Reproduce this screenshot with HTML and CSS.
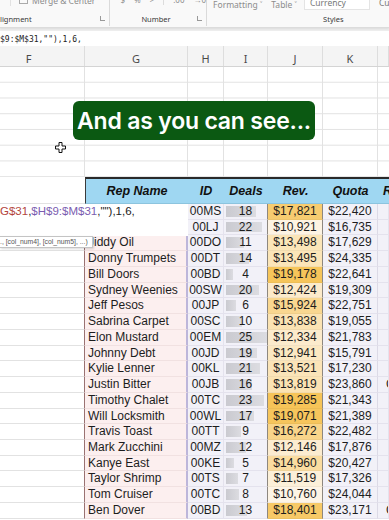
FILE: index.html
```html
<!DOCTYPE html>
<html lang="en">
<head>
  <meta charset="UTF-8" />
  <meta name="viewport" content="width=device-width, initial-scale=1.0"/>
  <title>Sales Reps</title>
  <link rel="stylesheet" href="styles.css">
</head>

<body>
  <header class="ribbon">
    <div class="group group-align">
      <div class="controls">
        <span class="merge-btn"><span class="merge-icon"></span>Merge &amp; Center</span>
      </div>
      <div class="label">lignment<span class="launcher"></span></div>
    </div>
    <div class="group group-number">
      <div class="controls symbols">
        <span>$</span><span>%</span><span>&gt;</span><span class="sep"></span><span>.00</span><span>→0</span>
      </div>
      <div class="label">Number<span class="launcher"></span></div>
    </div>
    <div class="group group-styles">
      <div class="controls">
        <span class="drop">Formatting ˅</span>
        <span class="drop">Table ˅</span>
        <span class="style-box">Currency</span>
        <span class="style-box">Curr</span>
      </div>
      <div class="label">Styles</div>
    </div>
  </header>

  <div class="formula-bar">$9:$M$31,""),1,6,</div>

  <div class="col-heads">
    <div>F</div><div>G</div><div>H</div><div>I</div><div>J</div><div>K</div><div></div>
  </div>

  <main class="sheet">
    <div class="blank"></div>

    <div class="row table-head">
      <div class="gutter"></div>
      <div class="th th-first">Rep Name</div>
      <div class="th">ID</div>
      <div class="th">Deals</div>
      <div class="th">Rev.</div>
      <div class="th">Quota</div>
      <div class="th th-cut">R</div>
    </div>

    <div class="row data"><div class="gutter"></div><div class="name edited"></div><div class="id">00MS</div><div class="deals"><span class="bar" style="width:29.5px"></span><span class="num">18</span></div><div class="rev" style="background:#f7cc70">$17,821</div><div class="quota">$22,420</div><div class="extra"></div></div>
    <div class="row data"><div class="gutter"></div><div class="name edited"></div><div class="id">00LJ</div><div class="deals"><span class="bar" style="width:36px"></span><span class="num">22</span></div><div class="rev" style="background:#fdf3e3">$10,921</div><div class="quota">$16,735</div><div class="extra"></div></div>
    <div class="row data"><div class="gutter"></div><div class="name">Jiddy Oil</div><div class="id">00DO</div><div class="deals"><span class="bar" style="width:18px"></span><span class="num">11</span></div><div class="rev" style="background:#fbe5b8">$13,498</div><div class="quota">$17,629</div><div class="extra"></div></div>
    <div class="row data"><div class="gutter"></div><div class="name">Donny Trumpets</div><div class="id">00DT</div><div class="deals"><span class="bar" style="width:23px"></span><span class="num">14</span></div><div class="rev" style="background:#fbe5b8">$13,495</div><div class="quota">$24,335</div><div class="extra"></div></div>
    <div class="row data"><div class="gutter"></div><div class="name">Bill Doors</div><div class="id">00BD</div><div class="deals"><span class="bar" style="width:6.6px"></span><span class="num">4</span></div><div class="rev" style="background:#f6c55a">$19,178</div><div class="quota">$22,641</div><div class="extra"></div></div>
    <div class="row data"><div class="gutter"></div><div class="name">Sydney Weenies</div><div class="id">00SW</div><div class="deals"><span class="bar" style="width:32.8px"></span><span class="num">20</span></div><div class="rev" style="background:#fceaca">$12,424</div><div class="quota">$19,309</div><div class="extra"></div></div>
    <div class="row data"><div class="gutter"></div><div class="name">Jeff Pesos</div><div class="id">00JP</div><div class="deals"><span class="bar" style="width:9.8px"></span><span class="num">6</span></div><div class="rev" style="background:#f9d790">$15,924</div><div class="quota">$22,751</div><div class="extra"></div></div>
    <div class="row data"><div class="gutter"></div><div class="name">Sabrina Carpet</div><div class="id">00SC</div><div class="deals"><span class="bar" style="width:16.4px"></span><span class="num">10</span></div><div class="rev" style="background:#fbe3b3">$13,838</div><div class="quota">$19,055</div><div class="extra"></div></div>
    <div class="row data"><div class="gutter"></div><div class="name">Elon Mustard</div><div class="id">00EM</div><div class="deals"><span class="bar" style="width:41px"></span><span class="num">25</span></div><div class="rev" style="background:#fcebcc">$12,334</div><div class="quota">$21,783</div><div class="extra"></div></div>
    <div class="row data"><div class="gutter"></div><div class="name">Johnny Debt</div><div class="id">00JD</div><div class="deals"><span class="bar" style="width:31.2px"></span><span class="num">19</span></div><div class="rev" style="background:#fbe8c2">$12,941</div><div class="quota">$15,791</div><div class="extra"></div></div>
    <div class="row data"><div class="gutter"></div><div class="name">Kylie Lenner</div><div class="id">00KL</div><div class="deals"><span class="bar" style="width:34.4px"></span><span class="num">21</span></div><div class="rev" style="background:#fbe4b8">$13,521</div><div class="quota">$17,230</div><div class="extra"></div></div>
    <div class="row data"><div class="gutter"></div><div class="name">Justin Bitter</div><div class="id">00JB</div><div class="deals"><span class="bar" style="width:26.2px"></span><span class="num">16</span></div><div class="rev" style="background:#fbe3b3">$13,819</div><div class="quota">$23,860</div><div class="extra">C</div></div>
    <div class="row data"><div class="gutter"></div><div class="name">Timothy Chalet</div><div class="id">00TC</div><div class="deals"><span class="bar" style="width:37.7px"></span><span class="num">23</span></div><div class="rev" style="background:#f6c458">$19,285</div><div class="quota">$21,343</div><div class="extra"></div></div>
    <div class="row data"><div class="gutter"></div><div class="name">Will Locksmith</div><div class="id">00WL</div><div class="deals"><span class="bar" style="width:27.9px"></span><span class="num">17</span></div><div class="rev" style="background:#f6c55c">$19,071</div><div class="quota">$21,389</div><div class="extra"></div></div>
    <div class="row data"><div class="gutter"></div><div class="name">Travis Toast</div><div class="id">00TT</div><div class="deals"><span class="bar" style="width:14.8px"></span><span class="num">9</span></div><div class="rev" style="background:#f9d58a">$16,272</div><div class="quota">$22,482</div><div class="extra"></div></div>
    <div class="row data"><div class="gutter"></div><div class="name">Mark Zucchini</div><div class="id">00MZ</div><div class="deals"><span class="bar" style="width:19.7px"></span><span class="num">12</span></div><div class="rev" style="background:#fcecd0">$12,146</div><div class="quota">$17,876</div><div class="extra"></div></div>
    <div class="row data"><div class="gutter"></div><div class="name">Kanye East</div><div class="id">00KE</div><div class="deals"><span class="bar" style="width:8.2px"></span><span class="num">5</span></div><div class="rev" style="background:#fadca0">$14,960</div><div class="quota">$20,427</div><div class="extra"></div></div>
    <div class="row data"><div class="gutter"></div><div class="name">Taylor Shrimp</div><div class="id">00TS</div><div class="deals"><span class="bar" style="width:11.5px"></span><span class="num">7</span></div><div class="rev" style="background:#fcf0d9">$11,519</div><div class="quota">$17,326</div><div class="extra"></div></div>
    <div class="row data"><div class="gutter"></div><div class="name">Tom Cruiser</div><div class="id">00TC</div><div class="deals"><span class="bar" style="width:13.1px"></span><span class="num">8</span></div><div class="rev" style="background:#fdf4e6">$10,760</div><div class="quota">$24,044</div><div class="extra"></div></div>
    <div class="row data"><div class="gutter"></div><div class="name">Ben Dover</div><div class="id">00BD</div><div class="deals"><span class="bar" style="width:21.3px"></span><span class="num">13</span></div><div class="rev" style="background:#f7c967">$18,401</div><div class="quota">$23,171</div><div class="extra">C</div></div>

    <!-- things floating over the grid -->
    <div class="cell-edit"><span class="ref-red">G$31</span>,<span class="ref-purple">$H$9:$M$31</span>,""),1,6,</div>
    <div class="hint">., [col_num4], [col_num5], ...)</div>

    <svg class="cursor" width="11" height="11" viewBox="0 0 11 11">
      <path d="M4 0.5h3v3.5h3.5v3h-3.5v3.5h-3v-3.5h-3.5v-3h3.5z" fill="#fff" stroke="#111" stroke-width="1"/>
    </svg>

    <div class="caption">And as you can see...</div>
  </main>
</body>
</html>
```

FILE: styles.css
```css
:root {
  --cols: 85px 103px 36px 44px 55px 55px 11px;
  --grid: #e2e2e2;
  --lav: #f2f1f8;
  --lav-line: #e4e2ed;
}

* {
  box-sizing: border-box;
}

body {
  margin: 0;
  width: 389px;
  height: 520px;
  overflow: hidden;
  background: #fff;
  font-family: 'Liberation Sans', Arial, sans-serif;
  color: #1d1d1d;
}

/* ribbon */
.ribbon {
  position: relative;
  z-index: 1;
  height: 28px;
  display: flex;
  background: #f9f9f9;
  border-bottom: 1px solid #dcdcdc;
  box-shadow: 0 1px 2px rgba(0, 0, 0, 0.08);
  overflow: hidden;
  font-family: 'Noto Sans', sans-serif;
}

.group {
  height: 26px;
  display: flex;
  flex-direction: column;
  justify-content: space-between;
  border-right: 1px solid #dadada;
}

.group-align { width: 111px; }
.group-number { width: 101px; }
.group-styles { flex: 1; border-right: none; }

.controls {
  height: 10px;
  display: flex;
  align-items: center;
  font-size: 8.5px;
  line-height: 10px;
  color: #8c8c8c;
  white-space: nowrap;
}

.merge-btn {
  margin-left: 10px;
  margin-top: -9px;
  padding: 0 14px 0 8px;
  border-left: 1px solid #e2e2e2;
  display: flex;
  align-items: center;
  gap: 4px;
}

.merge-icon {
  width: 9px;
  height: 7px;
  border: 1px solid #aaa;
}

.symbols {
  gap: 9px;
  padding-left: 10px;
  margin-top: -5px;
  font-size: 8px;
}

.symbols .sep {
  width: 1px;
  height: 9px;
  background: #dcdcdc;
}

.drop {
  margin-left: 6px;
  margin-right: 3px;
}

.style-box {
  height: 11px;
  margin-left: 4px;
  margin-top: -2px;
  padding: 0 5px;
  width: 66px;
  background: #fff;
  border: 1px solid #e4e4e4;
  border-top: none;
  line-height: 8px;
  color: #777;
}

.style-box + .style-box {
  width: auto;
  border: none;
  background: none;
}

.label {
  height: 12px;
  position: relative;
  font-size: 7.5px;
  color: #3a3a3a;
  line-height: 10px;
  white-space: nowrap;
}

.group-number .label { padding-left: 31px; }
.group-styles .label { padding-left: 116px; }

.launcher {
  position: absolute;
  right: 4px;
  top: 2px;
  width: 5px;
  height: 5px;
  border-left: 1px solid #999;
  border-bottom: 1px solid #999;
}

/* formula bar and column letters */
.formula-bar {
  height: 18px;
  border-top: 3px solid #eeeeee;
  padding-top: 2px;
  background: #fff;
  font-family: 'DejaVu Sans Mono', monospace;
  font-size: 8px;
  line-height: 14px;
  color: #222;
  white-space: nowrap;
}

.col-heads {
  display: grid;
  grid-template-columns: var(--cols);
  height: 21px;
  background: #f4f4f4;
  border-bottom: 1px solid #d4d4d4;
  font-family: 'Noto Sans', sans-serif;
  font-size: 11px;
  color: #4a4a4a;
}

.col-heads div {
  display: flex;
  align-items: center;
  justify-content: center;
  border-right: 1px solid #dddddd;
  padding-top: 5px;
}

.col-heads div:first-child {
  padding-right: 27px;
}

/* sheet */
.sheet {
  position: relative;
}

.blank {
  height: 110px;
  background:
    linear-gradient(var(--grid), var(--grid)) 84px 0 / 1px 100% no-repeat,
    linear-gradient(var(--grid), var(--grid)) 187px 0 / 1px 100% no-repeat,
    linear-gradient(var(--grid), var(--grid)) 223px 0 / 1px 100% no-repeat,
    linear-gradient(var(--grid), var(--grid)) 267px 0 / 1px 100% no-repeat,
    linear-gradient(var(--grid), var(--grid)) 322px 0 / 1px 100% no-repeat,
    linear-gradient(var(--grid), var(--grid)) 377px 0 / 1px 100% no-repeat,
    linear-gradient(to bottom, transparent 14.74px, var(--grid) 14.74px) 0 0 / 100% 15.74px;
}

.row {
  display: grid;
  grid-template-columns: var(--cols);
  height: 15.74px;
  font-size: 12px;
  line-height: 14.7px;
}

.row > div {
  border-right: 1px solid var(--grid);
  border-bottom: 1px solid var(--grid);
  white-space: nowrap;
  overflow: hidden;
}

.table-head {
  height: 27px;
}

.table-head .th {
  display: flex;
  align-items: center;
  justify-content: center;
  background: #9fd7f2;
  border-top: 2px solid #2a2a2a;
  border-right: none;
  border-bottom: 1px solid #8cc4de;
  font-weight: bold;
  font-style: italic;
  font-size: 12.5px;
  color: #111;
}

.table-head .th-first {
  border-left: 1px solid #3a3a3a;
}

.table-head .gutter {
  border-right: none;
}

.table-head .th-cut {
  justify-content: flex-start;
  padding-left: 5px;
}

.data .gutter {
  border-right-color: #9a7272;
}

.name {
  padding-left: 3px;
  background: #fcefef;
  border-bottom-color: #f1e1e1 !important;
  border-right: 2px solid #bdb6da !important;
}

.name.edited {
  background: #fff;
}

.id,
.deals,
.quota,
.extra {
  background: var(--lav);
  border-bottom-color: var(--lav-line) !important;
  border-right-color: var(--lav-line) !important;
  text-align: center;
}

.deals {
  position: relative;
  border-right-color: #8d8780 !important;
}

.bar {
  position: absolute;
  left: 2px;
  top: 2px;
  bottom: 2px;
  background: linear-gradient(to right, #cacad0, #dcdce1);
}

.num {
  position: relative;
}

.rev {
  text-align: center;
  border-right-color: #8d8780 !important;
  border-bottom-color: rgba(0, 0, 0, 0.04) !important;
}

.quota {
  border-right-color: #dcdae6 !important;
}

.extra {
  text-align: left;
  padding-left: 8px;
}

/* overlays */
.cell-edit {
  position: absolute;
  left: 0;
  top: 137px;
  width: 188px;
  height: 31.5px;
  background: #fff;
  font-size: 11.5px;
  line-height: 15.74px;
  white-space: nowrap;
  color: #222;
}

.ref-red { color: #b3443c; }
.ref-purple { color: #7b5cb0; }

.hint {
  position: absolute;
  left: 0;
  top: 169px;
  width: 93px;
  height: 12px;
  background: #fff;
  border: 1px solid #c4c4c4;
  border-left: none;
  box-shadow: 1px 1px 2px rgba(0, 0, 0, 0.15);
  font-size: 6.8px;
  line-height: 10px;
  color: #555;
  white-space: nowrap;
  overflow: hidden;
}

.cursor {
  position: absolute;
  left: 55px;
  top: 75px;
}

.caption {
  position: absolute;
  left: 73px;
  top: 34px;
  width: 242px;
  height: 39px;
  display: flex;
  align-items: center;
  justify-content: center;
  background: #0b5912;
  border-radius: 6px;
  color: #fff;
  font-family: Inter, sans-serif;
  font-weight: 600;
  font-size: 23px;
  letter-spacing: -0.2px;
}
```
